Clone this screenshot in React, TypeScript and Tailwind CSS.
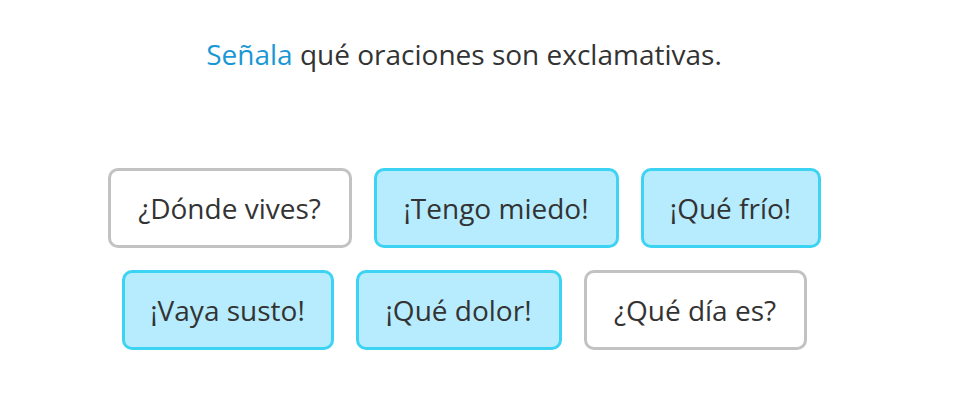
const rows: { text: string; on: boolean; w: string }[][] = [
  [
    { text: "¿Dónde vives?", on: false, w: "w-[244px]" },
    { text: "¡Tengo miedo!", on: true, w: "w-[245px]" },
    { text: "¡Qué frío!", on: true, w: "w-[180px]" },
  ],
  [
    { text: "¡Vaya susto!", on: true, w: "w-[212px]" },
    { text: "¡Qué dolor!", on: true, w: "w-[206px]" },
    { text: "¿Qué día es?", on: false, w: "w-[223px]" },
  ],
];

function Chip({ text, on, w }: { text: string; on: boolean; w: string }) {
  return (
    <button
      className={
        w +
        " h-[80px] rounded-[10px] border-[3px] text-[28px] text-[#333333] " +
        (on ? "border-[#3dd3f2] bg-[#b6ecfd]" : "border-[#c2c2c2] bg-white")
      }
    >
      {text}
    </button>
  );
}

export default function App() {
  return (
    <div className="flex h-[417px] w-[968px] flex-col items-center bg-white pr-[40px] font-['Open_Sans',sans-serif]">
      <p className="mt-[36px] text-[28px] leading-[36px] text-[#333333]">
        <span className="text-[#1a97d5]">Señala</span> qué oraciones son
        exclamativas.
      </p>
      <div className="mt-[96px] flex flex-col items-center gap-[22px]">
        {rows.map((row, i) => (
          <div key={i} className="flex gap-[22px]">
            {row.map((each) => (
              <Chip key={each.text} {...each} />
            ))}
          </div>
        ))}
      </div>
    </div>
  );
}
